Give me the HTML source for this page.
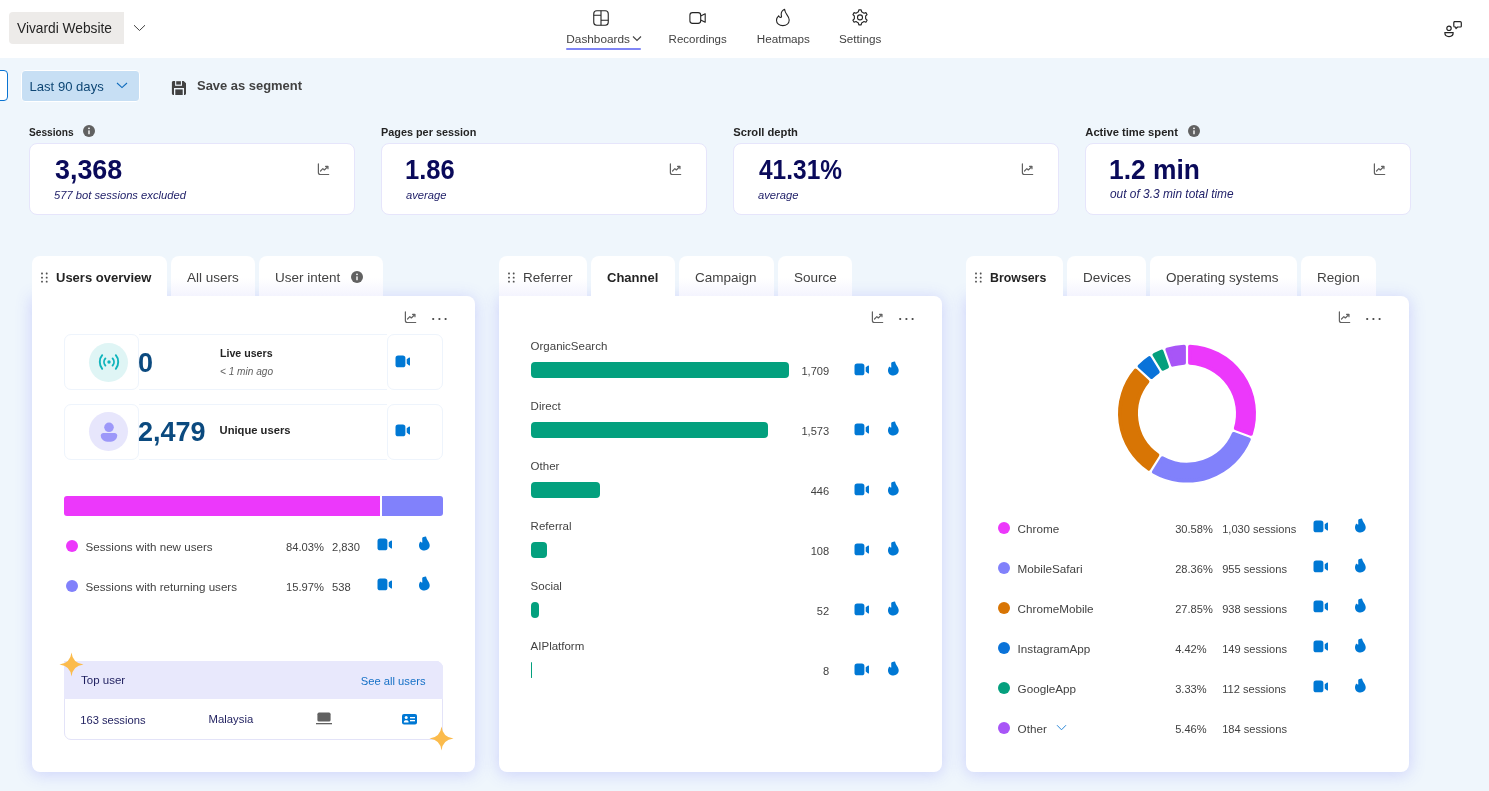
<!DOCTYPE html><html><head><meta charset="utf-8"><style>
html,body{margin:0;padding:0;}
body{width:1489px;height:791px;overflow:hidden;background:#eff6fc;position:relative;font-family:"Liberation Sans",sans-serif;}
.a{position:absolute;}
.t{position:absolute;white-space:nowrap;line-height:1;transform:translateZ(0);}
</style></head><body>
<div class="a" style="left:0px;top:0px;width:1489px;height:58px;background:#fff;"></div>
<div class="a" style="left:9px;top:12px;width:115px;height:32px;background:#edebe9;border-radius:4px 0 0 4px;"></div>
<div class="t" style="left:17.00px;top:22.36px;font-size:13.75px;font-weight:normal;font-style:normal;color:#242424;">Vivardi Website</div>
<svg class="a" style="left:133px;top:24px;" width="13" height="8" viewBox="0 0 13 8"><path d="M1 1.2 L6.5 6.5 L12 1.2" fill="none" stroke="#424242" stroke-width="1"/></svg>
<div class="t" style="left:566.30px;top:34.01px;font-size:11.8px;font-weight:normal;font-style:normal;color:#424242;">Dashboards</div>
<svg class="a" style="left:632px;top:35px;" width="10" height="7" viewBox="0 0 10 7"><path d="M1 1.5 L5 5.5 L9 1.5" fill="none" stroke="#424242" stroke-width="1.1"/></svg>
<div class="a" style="left:566px;top:48px;width:75px;height:2px;background:#7f85f5;border-radius:1px;"></div>
<div class="t" style="left:668.60px;top:34.27px;font-size:11.5px;font-weight:normal;font-style:normal;color:#424242;">Recordings</div>
<div class="t" style="left:756.70px;top:33.10px;font-size:11.7px;font-weight:normal;font-style:normal;color:#424242;">Heatmaps</div>
<div class="t" style="left:839.00px;top:33.10px;font-size:11.7px;font-weight:normal;font-style:normal;color:#424242;">Settings</div>
<svg class="a" style="left:592px;top:9px;" width="18" height="18" viewBox="0 0 18 18"><rect x="1.75" y="1.75" width="14.5" height="14.5" rx="3" fill="none" stroke="#242424" stroke-width="1.1"/><path d="M9 1.75 V16.25 M1.75 6.3 H9 M9 11.3 H16.25" stroke="#242424" stroke-width="1.1" fill="none"/></svg>
<svg class="a" style="left:688px;top:10px;" width="19" height="15" viewBox="0 0 19 15"><rect x="1.9" y="2.6" width="10.8" height="10.8" rx="2.6" fill="none" stroke="#242424" stroke-width="1.1"/><path d="M12.7 6 L17.2 3.7 V12.3 L12.7 10" fill="none" stroke="#242424" stroke-width="1.1" stroke-linejoin="round"/></svg>
<svg class="a" style="left:775px;top:8px;" width="16" height="19" viewBox="0 0 16 19"><path d="M9.6 1.3 C7.6 2.2 6.2 4 6.2 6.2 C6.2 7.2 6.5 8 6.5 8.6 C6.4 9.6 5 9.6 4.2 8.6 L3.6 7.8 C2.2 9.1 1.5 10.8 1.5 12.2 C1.5 15.4 4.3 17.6 7.8 17.6 C11.4 17.6 14.2 15.4 14.2 12 C14.2 9.6 12.8 7.8 11.6 6.2 C10.8 5 9.9 3.6 9.6 1.3 Z" fill="none" stroke="#242424" stroke-width="1.1" stroke-linejoin="round"/></svg>
<svg class="a" style="left:851px;top:8px;" width="18" height="19" viewBox="0 0 18 19"><path d="M7.38 3.83 L7.81 1.89 L10.19 1.89 L10.62 3.83 L13.01 5.21 L14.91 4.62 L16.10 6.68 L14.63 8.02 L14.63 10.78 L16.10 12.12 L14.91 14.18 L13.01 13.59 L10.62 14.97 L10.19 16.91 L7.81 16.91 L7.38 14.97 L4.99 13.59 L3.09 14.18 L1.90 12.12 L3.37 10.78 L3.37 8.02 L1.90 6.68 L3.09 4.62 L4.99 5.21 Z" fill="none" stroke="#242424" stroke-width="1.1" stroke-linejoin="round"/><circle cx="9" cy="9.4" r="2.5" fill="none" stroke="#242424" stroke-width="1.1"/></svg>
<svg class="a" style="left:1443px;top:20px;" width="20" height="19" viewBox="0 0 20 19"><circle cx="6" cy="8.3" r="2.2" fill="none" stroke="#242424" stroke-width="1.2"/><path d="M1.8 12.6 H10.2 C10.2 15.4 8.6 16.6 6 16.6 C3.4 16.6 1.8 15.4 1.8 12.6 Z" fill="none" stroke="#242424" stroke-width="1.2" stroke-linejoin="round"/><path d="M11.2 1.7 H17.2 C17.9 1.7 18.3 2.1 18.3 2.8 V5.9 C18.3 6.6 17.9 7 17.2 7 H14.6 L13 8.6 L12.6 7 H11.9 C11.2 7 10.8 6.6 10.8 5.9 V2.8 C10.8 2.1 11.2 1.7 11.9 1.7 Z" fill="none" stroke="#242424" stroke-width="1.2" stroke-linejoin="round"/></svg>
<div class="a" style="left:-6px;top:70px;width:12px;height:29px;background:#fff;border:1.5px solid #0a74d2;border-radius:4px;"></div>
<div class="a" style="left:20.5px;top:69.8px;width:117.5px;height:30px;background:#c7dff4;border:1px solid #fff;border-radius:4px;"></div>
<div class="t" style="left:29.50px;top:79.91px;font-size:13.1px;font-weight:normal;font-style:normal;color:#0e4775;">Last 90 days</div>
<svg class="a" style="left:116px;top:82px;" width="12" height="7" viewBox="0 0 12 7"><path d="M1 1 L6 5.6 L11 1" fill="none" stroke="#0f6cbd" stroke-width="1.1"/></svg>
<svg class="a" style="left:171px;top:80px;" width="16" height="16" viewBox="0 0 16 16"><path d="M2.4 0.9 H12.6 L15 3.3 V13.5 C15 14.3 14.3 15 13.5 15 H2.4 C1.6 15 0.9 14.3 0.9 13.5 V2.4 C0.9 1.6 1.6 0.9 2.4 0.9 Z" fill="#424242"/><rect x="4.1" y="0.5" width="6.9" height="5.3" fill="#eff6fc"/><rect x="5.2" y="1.2" width="4.7" height="3.4" fill="#424242"/><rect x="3" y="8" width="10" height="7.5" fill="#eff6fc"/><rect x="4.3" y="9.4" width="7.4" height="5.6" fill="#424242"/></svg>
<div class="t" style="left:197.00px;top:79.84px;font-size:12.95px;font-weight:bold;font-style:normal;color:#424242;">Save as segment</div>
<div class="t" style="left:29.30px;top:126.52px;font-size:11.2px;font-weight:bold;font-style:normal;color:#242424;transform:translateZ(0) scaleX(0.91);transform-origin:0 0;">Sessions</div>
<div class="a" style="left:29px;top:143px;width:323.5px;height:69.5px;background:#fff;border:1px solid #e6e5fb;border-radius:8px;"></div>
<div class="t" style="left:54.50px;top:155.60px;font-size:28px;font-weight:bold;font-style:normal;color:#0a0a5a;transform:translateZ(0) scaleX(0.96);transform-origin:0 0;">3,368</div>
<div class="t" style="left:54.00px;top:189.52px;font-size:11.2px;font-weight:normal;font-style:italic;color:#22226a;">577 bot sessions excluded</div>
<svg class="a" style="left:316.8px;top:162.8px;" width="13" height="13" viewBox="0 0 14 14"><path d="M1.5 1 V10.2 C1.5 11.6 2.2 12.4 3.6 12.4 H12.6" fill="none" stroke="#616161" stroke-width="1.3" stroke-linecap="round"/><path d="M3.8 8.6 L6.3 6.1 L7.9 7.5 L11.4 4" fill="none" stroke="#616161" stroke-width="1.3" stroke-linecap="round" stroke-linejoin="round"/><path d="M9.2 3.6 H11.8 V6.2" fill="none" stroke="#616161" stroke-width="1.3" stroke-linecap="round" stroke-linejoin="round"/></svg>
<div class="t" style="left:381.30px;top:126.52px;font-size:11.2px;font-weight:bold;font-style:normal;color:#242424;transform:translateZ(0) scaleX(0.97);transform-origin:0 0;">Pages per session</div>
<div class="a" style="left:381px;top:143px;width:323.5px;height:69.5px;background:#fff;border:1px solid #e6e5fb;border-radius:8px;"></div>
<div class="t" style="left:405.00px;top:155.60px;font-size:28px;font-weight:bold;font-style:normal;color:#0a0a5a;transform:translateZ(0) scaleX(0.912);transform-origin:0 0;">1.86</div>
<div class="t" style="left:406.00px;top:189.52px;font-size:11.2px;font-weight:normal;font-style:italic;color:#22226a;">average</div>
<svg class="a" style="left:668.8px;top:162.8px;" width="13" height="13" viewBox="0 0 14 14"><path d="M1.5 1 V10.2 C1.5 11.6 2.2 12.4 3.6 12.4 H12.6" fill="none" stroke="#616161" stroke-width="1.3" stroke-linecap="round"/><path d="M3.8 8.6 L6.3 6.1 L7.9 7.5 L11.4 4" fill="none" stroke="#616161" stroke-width="1.3" stroke-linecap="round" stroke-linejoin="round"/><path d="M9.2 3.6 H11.8 V6.2" fill="none" stroke="#616161" stroke-width="1.3" stroke-linecap="round" stroke-linejoin="round"/></svg>
<div class="t" style="left:733.30px;top:126.52px;font-size:11.2px;font-weight:bold;font-style:normal;color:#242424;transform:translateZ(0) scaleX(1.0);transform-origin:0 0;">Scroll depth</div>
<div class="a" style="left:733px;top:143px;width:323.5px;height:69.5px;background:#fff;border:1px solid #e6e5fb;border-radius:8px;"></div>
<div class="t" style="left:758.50px;top:155.60px;font-size:28px;font-weight:bold;font-style:normal;color:#0a0a5a;transform:translateZ(0) scaleX(0.874);transform-origin:0 0;">41.31%</div>
<div class="t" style="left:758.00px;top:189.52px;font-size:11.2px;font-weight:normal;font-style:italic;color:#22226a;">average</div>
<svg class="a" style="left:1020.8px;top:162.8px;" width="13" height="13" viewBox="0 0 14 14"><path d="M1.5 1 V10.2 C1.5 11.6 2.2 12.4 3.6 12.4 H12.6" fill="none" stroke="#616161" stroke-width="1.3" stroke-linecap="round"/><path d="M3.8 8.6 L6.3 6.1 L7.9 7.5 L11.4 4" fill="none" stroke="#616161" stroke-width="1.3" stroke-linecap="round" stroke-linejoin="round"/><path d="M9.2 3.6 H11.8 V6.2" fill="none" stroke="#616161" stroke-width="1.3" stroke-linecap="round" stroke-linejoin="round"/></svg>
<div class="t" style="left:1085.30px;top:126.52px;font-size:11.2px;font-weight:bold;font-style:normal;color:#242424;transform:translateZ(0) scaleX(1.0);transform-origin:0 0;">Active time spent</div>
<div class="a" style="left:1085px;top:143px;width:323.5px;height:69.5px;background:#fff;border:1px solid #e6e5fb;border-radius:8px;"></div>
<div class="t" style="left:1109.30px;top:155.60px;font-size:28px;font-weight:bold;font-style:normal;color:#0a0a5a;transform:translateZ(0) scaleX(0.941);transform-origin:0 0;">1.2 min</div>
<div class="t" style="left:1110.00px;top:188.93px;font-size:11.9px;font-weight:normal;font-style:italic;color:#22226a;">out of 3.3 min total time</div>
<svg class="a" style="left:1372.8px;top:162.8px;" width="13" height="13" viewBox="0 0 14 14"><path d="M1.5 1 V10.2 C1.5 11.6 2.2 12.4 3.6 12.4 H12.6" fill="none" stroke="#616161" stroke-width="1.3" stroke-linecap="round"/><path d="M3.8 8.6 L6.3 6.1 L7.9 7.5 L11.4 4" fill="none" stroke="#616161" stroke-width="1.3" stroke-linecap="round" stroke-linejoin="round"/><path d="M9.2 3.6 H11.8 V6.2" fill="none" stroke="#616161" stroke-width="1.3" stroke-linecap="round" stroke-linejoin="round"/></svg>
<svg class="a" style="left:83px;top:125px;" width="12" height="12" viewBox="0 0 12 12"><circle cx="6.0" cy="6.0" r="6.0" fill="#616161"/><rect x="5.3" y="5.28" width="1.4" height="4.08" rx="0.5" fill="#fff"/><circle cx="6.0" cy="3.3600000000000003" r="0.9" fill="#fff"/></svg>
<svg class="a" style="left:1188px;top:125px;" width="12" height="12" viewBox="0 0 12 12"><circle cx="6.0" cy="6.0" r="6.0" fill="#616161"/><rect x="5.3" y="5.28" width="1.4" height="4.08" rx="0.5" fill="#fff"/><circle cx="6.0" cy="3.3600000000000003" r="0.9" fill="#fff"/></svg>
<div class="a" style="left:32px;top:296px;width:443px;height:476px;background:#fff;border-radius:0 8px 8px 8px;box-shadow:0 2px 16px 1px rgba(90,90,250,0.21);"></div>
<div class="a" style="left:32px;top:256px;width:135px;height:44px;background:#fff;border-radius:8px 8px 0 0;z-index:2;"></div>
<div class="a" style="left:171px;top:256px;width:84px;height:40px;background:linear-gradient(#fff 0%, #fff 55%, #f4f4fe 100%);border-radius:8px 8px 0 0;"></div>
<div class="a" style="left:259px;top:256px;width:124px;height:40px;background:linear-gradient(#fff 0%, #fff 55%, #f4f4fe 100%);border-radius:8px 8px 0 0;"></div>
<svg class="a" style="left:40.5px;top:271.5px;z-index:3;" width="7" height="11" viewBox="0 0 7 11"><rect x="0.10" y="0.60" width="1.8" height="1.8" rx="0.6" fill="#505050"/><rect x="0.10" y="4.70" width="1.8" height="1.8" rx="0.6" fill="#505050"/><rect x="0.10" y="8.80" width="1.8" height="1.8" rx="0.6" fill="#505050"/><rect x="4.80" y="0.60" width="1.8" height="1.8" rx="0.6" fill="#505050"/><rect x="4.80" y="4.70" width="1.8" height="1.8" rx="0.6" fill="#505050"/><rect x="4.80" y="8.80" width="1.8" height="1.8" rx="0.6" fill="#505050"/></svg>
<div class="t" style="left:56.00px;top:271.00px;font-size:13px;font-weight:bold;font-style:normal;color:#242424;z-index:3;">Users overview</div>
<div class="t" style="left:187.00px;top:270.57px;font-size:13.5px;font-weight:normal;font-style:normal;color:#424242;z-index:3;">All users</div>
<div class="t" style="left:275.00px;top:270.57px;font-size:13.5px;font-weight:normal;font-style:normal;color:#424242;z-index:3;">User intent</div>
<svg class="a" style="left:351px;top:271px;" width="12" height="12" viewBox="0 0 12 12"><circle cx="6.0" cy="6.0" r="6.0" fill="#616161"/><rect x="5.3" y="5.28" width="1.4" height="4.08" rx="0.5" fill="#fff"/><circle cx="6.0" cy="3.3600000000000003" r="0.9" fill="#fff"/></svg>
<svg class="a" style="left:404.2px;top:310.8px;" width="13" height="13" viewBox="0 0 14 14"><path d="M1.5 1 V10.2 C1.5 11.6 2.2 12.4 3.6 12.4 H12.6" fill="none" stroke="#616161" stroke-width="1.3" stroke-linecap="round"/><path d="M3.8 8.6 L6.3 6.1 L7.9 7.5 L11.4 4" fill="none" stroke="#616161" stroke-width="1.3" stroke-linecap="round" stroke-linejoin="round"/><path d="M9.2 3.6 H11.8 V6.2" fill="none" stroke="#616161" stroke-width="1.3" stroke-linecap="round" stroke-linejoin="round"/></svg>
<svg class="a" style="left:432px;top:317px;" width="16" height="4" viewBox="0 0 16 4"><circle cx="1.20" cy="2" r="1.1" fill="#424242"/><circle cx="7.40" cy="2" r="1.1" fill="#424242"/><circle cx="13.60" cy="2" r="1.1" fill="#424242"/></svg>
<div class="a" style="left:499px;top:296px;width:443px;height:476px;background:#fff;border-radius:0 8px 8px 8px;box-shadow:0 2px 16px 1px rgba(90,90,250,0.21);"></div>
<div class="a" style="left:499px;top:256px;width:88px;height:40px;background:linear-gradient(#fff 0%, #fff 55%, #f4f4fe 100%);border-radius:8px 8px 0 0;"></div>
<div class="a" style="left:591px;top:256px;width:84px;height:44px;background:#fff;border-radius:8px 8px 0 0;z-index:2;"></div>
<div class="a" style="left:679px;top:256px;width:95px;height:40px;background:linear-gradient(#fff 0%, #fff 55%, #f4f4fe 100%);border-radius:8px 8px 0 0;"></div>
<div class="a" style="left:778px;top:256px;width:74px;height:40px;background:linear-gradient(#fff 0%, #fff 55%, #f4f4fe 100%);border-radius:8px 8px 0 0;"></div>
<svg class="a" style="left:507.5px;top:271.5px;z-index:3;" width="7" height="11" viewBox="0 0 7 11"><rect x="0.10" y="0.60" width="1.8" height="1.8" rx="0.6" fill="#505050"/><rect x="0.10" y="4.70" width="1.8" height="1.8" rx="0.6" fill="#505050"/><rect x="0.10" y="8.80" width="1.8" height="1.8" rx="0.6" fill="#505050"/><rect x="4.80" y="0.60" width="1.8" height="1.8" rx="0.6" fill="#505050"/><rect x="4.80" y="4.70" width="1.8" height="1.8" rx="0.6" fill="#505050"/><rect x="4.80" y="8.80" width="1.8" height="1.8" rx="0.6" fill="#505050"/></svg>
<div class="t" style="left:523.00px;top:270.57px;font-size:13.5px;font-weight:normal;font-style:normal;color:#424242;z-index:3;">Referrer</div>
<div class="t" style="left:607.00px;top:271.00px;font-size:13px;font-weight:bold;font-style:normal;color:#242424;z-index:3;">Channel</div>
<div class="t" style="left:695.00px;top:270.57px;font-size:13.5px;font-weight:normal;font-style:normal;color:#424242;z-index:3;">Campaign</div>
<div class="t" style="left:794.00px;top:270.57px;font-size:13.5px;font-weight:normal;font-style:normal;color:#424242;z-index:3;">Source</div>
<svg class="a" style="left:871.2px;top:310.8px;" width="13" height="13" viewBox="0 0 14 14"><path d="M1.5 1 V10.2 C1.5 11.6 2.2 12.4 3.6 12.4 H12.6" fill="none" stroke="#616161" stroke-width="1.3" stroke-linecap="round"/><path d="M3.8 8.6 L6.3 6.1 L7.9 7.5 L11.4 4" fill="none" stroke="#616161" stroke-width="1.3" stroke-linecap="round" stroke-linejoin="round"/><path d="M9.2 3.6 H11.8 V6.2" fill="none" stroke="#616161" stroke-width="1.3" stroke-linecap="round" stroke-linejoin="round"/></svg>
<svg class="a" style="left:899px;top:317px;" width="16" height="4" viewBox="0 0 16 4"><circle cx="1.20" cy="2" r="1.1" fill="#424242"/><circle cx="7.40" cy="2" r="1.1" fill="#424242"/><circle cx="13.60" cy="2" r="1.1" fill="#424242"/></svg>
<div class="a" style="left:966px;top:296px;width:443px;height:476px;background:#fff;border-radius:0 8px 8px 8px;box-shadow:0 2px 16px 1px rgba(90,90,250,0.21);"></div>
<div class="a" style="left:966px;top:256px;width:97px;height:44px;background:#fff;border-radius:8px 8px 0 0;z-index:2;"></div>
<div class="a" style="left:1067px;top:256px;width:79px;height:40px;background:linear-gradient(#fff 0%, #fff 55%, #f4f4fe 100%);border-radius:8px 8px 0 0;"></div>
<div class="a" style="left:1150px;top:256px;width:147px;height:40px;background:linear-gradient(#fff 0%, #fff 55%, #f4f4fe 100%);border-radius:8px 8px 0 0;"></div>
<div class="a" style="left:1301px;top:256px;width:75px;height:40px;background:linear-gradient(#fff 0%, #fff 55%, #f4f4fe 100%);border-radius:8px 8px 0 0;"></div>
<svg class="a" style="left:974.5px;top:271.5px;z-index:3;" width="7" height="11" viewBox="0 0 7 11"><rect x="0.10" y="0.60" width="1.8" height="1.8" rx="0.6" fill="#505050"/><rect x="0.10" y="4.70" width="1.8" height="1.8" rx="0.6" fill="#505050"/><rect x="0.10" y="8.80" width="1.8" height="1.8" rx="0.6" fill="#505050"/><rect x="4.80" y="0.60" width="1.8" height="1.8" rx="0.6" fill="#505050"/><rect x="4.80" y="4.70" width="1.8" height="1.8" rx="0.6" fill="#505050"/><rect x="4.80" y="8.80" width="1.8" height="1.8" rx="0.6" fill="#505050"/></svg>
<div class="t" style="left:990.00px;top:271.00px;font-size:13px;font-weight:bold;font-style:normal;color:#242424;transform:translateZ(0) scaleX(0.95);transform-origin:0 0;z-index:3;">Browsers</div>
<div class="t" style="left:1083.00px;top:270.57px;font-size:13.5px;font-weight:normal;font-style:normal;color:#424242;z-index:3;">Devices</div>
<div class="t" style="left:1166.00px;top:270.57px;font-size:13.5px;font-weight:normal;font-style:normal;color:#424242;z-index:3;">Operating systems</div>
<div class="t" style="left:1317.00px;top:270.57px;font-size:13.5px;font-weight:normal;font-style:normal;color:#424242;z-index:3;">Region</div>
<svg class="a" style="left:1338.2px;top:310.8px;" width="13" height="13" viewBox="0 0 14 14"><path d="M1.5 1 V10.2 C1.5 11.6 2.2 12.4 3.6 12.4 H12.6" fill="none" stroke="#616161" stroke-width="1.3" stroke-linecap="round"/><path d="M3.8 8.6 L6.3 6.1 L7.9 7.5 L11.4 4" fill="none" stroke="#616161" stroke-width="1.3" stroke-linecap="round" stroke-linejoin="round"/><path d="M9.2 3.6 H11.8 V6.2" fill="none" stroke="#616161" stroke-width="1.3" stroke-linecap="round" stroke-linejoin="round"/></svg>
<svg class="a" style="left:1366px;top:317px;" width="16" height="4" viewBox="0 0 16 4"><circle cx="1.20" cy="2" r="1.1" fill="#424242"/><circle cx="7.40" cy="2" r="1.1" fill="#424242"/><circle cx="13.60" cy="2" r="1.1" fill="#424242"/></svg>
<div class="a" style="left:64.2px;top:334.2px;width:73px;height:54.3px;background:#fff;border:1px solid #eef4fc;border-radius:7px;"></div>
<div class="a" style="left:139px;top:334.2px;width:248px;height:54.3px;background:#fff;border-top:1px solid #eef4fc;border-bottom:1px solid #eef4fc;"></div>
<div class="a" style="left:387px;top:334.2px;width:53.6px;height:54.3px;background:#fff;border:1px solid #eef4fc;border-radius:7px;"></div>
<div class="a" style="left:64.2px;top:403.5px;width:73px;height:54.3px;background:#fff;border:1px solid #eef4fc;border-radius:7px;"></div>
<div class="a" style="left:139px;top:403.5px;width:248px;height:54.3px;background:#fff;border-top:1px solid #eef4fc;border-bottom:1px solid #eef4fc;"></div>
<div class="a" style="left:387px;top:403.5px;width:53.6px;height:54.3px;background:#fff;border:1px solid #eef4fc;border-radius:7px;"></div>
<div class="a" style="left:89px;top:343px;width:39px;height:39px;background:#dff5f5;border-radius:50%;"></div>
<svg class="a" style="left:97px;top:353px;" width="24" height="19" viewBox="0 0 24 19"><path d="M5.2 2.2 C2 5.8 2 12.2 5.2 15.8 M18.8 2.2 C22 5.8 22 12.2 18.8 15.8 M8.4 5.4 C6.6 7.4 6.6 10.6 8.4 12.6 M15.6 5.4 C17.4 7.4 17.4 10.6 15.6 12.6" fill="none" stroke="#0fb4bc" stroke-width="1.9" stroke-linecap="round"/><circle cx="12" cy="9" r="1.7" fill="#0fb4bc"/></svg>
<div class="a" style="left:89px;top:412px;width:39px;height:39px;background:#e7e6fc;border-radius:50%;"></div>
<svg class="a" style="left:99px;top:420px;" width="20" height="24" viewBox="0 0 20 24"><circle cx="10" cy="7.3" r="4.8" fill="#9d98f9"/><path d="M1.8 15.4 C1.8 13.9 2.9 13 4.4 13 H15.6 C17.1 13 18.2 13.9 18.2 15.4 C18.2 19.4 14.6 21.8 10 21.8 C5.4 21.8 1.8 19.4 1.8 15.4 Z" fill="#9d98f9"/></svg>
<div class="t" style="left:138.20px;top:348.60px;font-size:28px;font-weight:bold;font-style:normal;color:#0b4a7f;transform:translateZ(0) scaleX(0.965);transform-origin:0 0;">0</div>
<div class="t" style="left:219.60px;top:347.82px;font-size:11.2px;font-weight:bold;font-style:normal;color:#242424;transform:translateZ(0) scaleX(0.95);transform-origin:0 0;">Live users</div>
<div class="t" style="left:220.00px;top:367.45px;font-size:10.1px;font-weight:normal;font-style:italic;color:#616161;">&lt; 1 min ago</div>
<div class="t" style="left:138.20px;top:417.60px;font-size:28px;font-weight:bold;font-style:normal;color:#0b4a7f;transform:translateZ(0) scaleX(0.965);transform-origin:0 0;">2,479</div>
<div class="t" style="left:219.60px;top:424.62px;font-size:11.2px;font-weight:bold;font-style:normal;color:#242424;">Unique users</div>
<svg class="a" style="left:394.8px;top:355.1px;" width="16" height="13" viewBox="0 0 16 13"><rect x="0.5" y="0.5" width="9.9" height="11.8" rx="2.6" fill="#0078d4"/><path d="M11.7 4.3 L14.1 2.6 C14.5 2.3 15 2.6 15 3.1 V9.9 C15 10.4 14.5 10.7 14.1 10.4 L11.7 8.6 Z" fill="#0078d4"/></svg>
<svg class="a" style="left:394.8px;top:424.1px;" width="16" height="13" viewBox="0 0 16 13"><rect x="0.5" y="0.5" width="9.9" height="11.8" rx="2.6" fill="#0078d4"/><path d="M11.7 4.3 L14.1 2.6 C14.5 2.3 15 2.6 15 3.1 V9.9 C15 10.4 14.5 10.7 14.1 10.4 L11.7 8.6 Z" fill="#0078d4"/></svg>
<div class="a" style="left:64px;top:496px;width:316px;height:20px;background:#ec38fb;border-radius:3px 0 0 3px;"></div>
<div class="a" style="left:382px;top:496px;width:61px;height:20px;background:#8181fb;border-radius:0 3px 3px 0;"></div>
<div class="a" style="left:66px;top:540px;width:12px;height:12px;background:#ec38fb;border-radius:50%;"></div>
<div class="t" style="left:85.60px;top:541.18px;font-size:11.6px;font-weight:normal;font-style:normal;color:#424242;">Sessions with new users</div>
<div class="t" style="left:286.00px;top:541.52px;font-size:11.2px;font-weight:normal;font-style:normal;color:#424242;">84.03%</div>
<div class="t" style="left:332.00px;top:541.52px;font-size:11.2px;font-weight:normal;font-style:normal;color:#424242;">2,830</div>
<svg class="a" style="left:376.8px;top:538.1px;" width="16" height="13" viewBox="0 0 16 13"><rect x="0.5" y="0.5" width="9.9" height="11.8" rx="2.6" fill="#0078d4"/><path d="M11.7 4.3 L14.1 2.6 C14.5 2.3 15 2.6 15 3.1 V9.9 C15 10.4 14.5 10.7 14.1 10.4 L11.7 8.6 Z" fill="#0078d4"/></svg>
<svg class="a" style="left:417.5px;top:535.8px;" width="13" height="16" viewBox="0 0 13 16"><path d="M4.2 2.6 C4.2 1.6 5.2 0.9 6.4 0.8 L8 0.6 C8.3 2.2 9 3.6 10 5 C11 6.4 11.7 7.8 11.7 9.6 C11.7 12.4 9.4 14.4 6.5 14.4 C3.4 14.4 1 12.4 1 9.4 C1 7.8 1.6 6.4 2.4 5.4 C2.8 6.1 3.6 6.6 4.3 6.4 Z" fill="#0078d4"/></svg>
<div class="a" style="left:66px;top:580px;width:12px;height:12px;background:#8181fb;border-radius:50%;"></div>
<div class="t" style="left:85.60px;top:581.18px;font-size:11.6px;font-weight:normal;font-style:normal;color:#424242;">Sessions with returning users</div>
<div class="t" style="left:286.00px;top:581.52px;font-size:11.2px;font-weight:normal;font-style:normal;color:#424242;">15.97%</div>
<div class="t" style="left:332.00px;top:581.52px;font-size:11.2px;font-weight:normal;font-style:normal;color:#424242;">538</div>
<svg class="a" style="left:376.8px;top:578.1px;" width="16" height="13" viewBox="0 0 16 13"><rect x="0.5" y="0.5" width="9.9" height="11.8" rx="2.6" fill="#0078d4"/><path d="M11.7 4.3 L14.1 2.6 C14.5 2.3 15 2.6 15 3.1 V9.9 C15 10.4 14.5 10.7 14.1 10.4 L11.7 8.6 Z" fill="#0078d4"/></svg>
<svg class="a" style="left:417.5px;top:575.8px;" width="13" height="16" viewBox="0 0 13 16"><path d="M4.2 2.6 C4.2 1.6 5.2 0.9 6.4 0.8 L8 0.6 C8.3 2.2 9 3.6 10 5 C11 6.4 11.7 7.8 11.7 9.6 C11.7 12.4 9.4 14.4 6.5 14.4 C3.4 14.4 1 12.4 1 9.4 C1 7.8 1.6 6.4 2.4 5.4 C2.8 6.1 3.6 6.6 4.3 6.4 Z" fill="#0078d4"/></svg>
<div class="a" style="left:64px;top:661px;width:377px;height:77px;background:#fff;border:1px solid #e3e3f8;border-radius:0 7px 7px 7px;"></div>
<div class="a" style="left:64px;top:661px;width:379px;height:38px;background:#e8e8fc;border-radius:0 7px 0 0;"></div>
<div class="t" style="left:81.00px;top:675.27px;font-size:11.5px;font-weight:normal;font-style:normal;color:#1e1e5e;">Top user</div>
<div class="t" style="left:360.80px;top:675.52px;font-size:11.2px;font-weight:normal;font-style:normal;color:#1570c6;">See all users</div>
<div class="t" style="left:80.20px;top:714.52px;font-size:11.2px;font-weight:normal;font-style:normal;color:#1e1e5e;">163 sessions</div>
<div class="t" style="left:208.60px;top:714.43px;font-size:11.3px;font-weight:normal;font-style:normal;color:#1e1e5e;">Malaysia</div>
<svg class="a" style="left:315px;top:712px;" width="18" height="13" viewBox="0 0 18 13"><rect x="2.4" y="0.6" width="13.2" height="9" rx="1.6" fill="#616161"/><rect x="1" y="11" width="16" height="1.3" fill="#616161"/></svg>
<svg class="a" style="left:401px;top:713px;" width="17" height="12" viewBox="0 0 17 12"><rect x="1" y="1" width="15" height="10.5" rx="2" fill="#0078d4"/><circle cx="5.2" cy="4.6" r="1.5" fill="#fff"/><path d="M2.8 9.4 C2.8 7.6 3.8 7.2 5.2 7.2 C6.6 7.2 7.6 7.6 7.6 9.4 Z" fill="#fff"/><rect x="9" y="4" width="5" height="1.3" fill="#fff"/><rect x="9" y="7" width="5" height="1.3" fill="#fff"/></svg>
<svg class="a" style="left:0px;top:0px;z-index:4;pointer-events:none;" width="1489" height="791" viewBox="0 0 1489 791"><path d="M71.5 652.5 Q72.7 663.3 83.5 664.5 Q72.7 665.7 71.5 676.5 Q70.3 665.7 59.5 664.5 Q70.3 663.3 71.5 652.5 Z" fill="#fbbb4c"/></svg>
<svg class="a" style="left:0px;top:0px;z-index:4;pointer-events:none;" width="1489" height="791" viewBox="0 0 1489 791"><path d="M441.5 726.5 Q442.7 737.3 453.5 738.5 Q442.7 739.7 441.5 750.5 Q440.3 739.7 429.5 738.5 Q440.3 737.3 441.5 726.5 Z" fill="#fbbb4c"/></svg>
<div class="t" style="left:530.60px;top:341.27px;font-size:11.5px;font-weight:normal;font-style:normal;color:#424242;">OrganicSearch</div>
<div class="a" style="left:531px;top:362px;width:258px;height:16px;background:#03a07e;border-radius:4px;"></div>
<div class="t" style="right:659.80px;top:365.80px;font-size:11.1px;font-weight:normal;font-style:normal;color:#424242;">1,709</div>
<svg class="a" style="left:853.8px;top:363.1px;" width="16" height="13" viewBox="0 0 16 13"><rect x="0.5" y="0.5" width="9.9" height="11.8" rx="2.6" fill="#0078d4"/><path d="M11.7 4.3 L14.1 2.6 C14.5 2.3 15 2.6 15 3.1 V9.9 C15 10.4 14.5 10.7 14.1 10.4 L11.7 8.6 Z" fill="#0078d4"/></svg>
<svg class="a" style="left:887.0px;top:360.8px;" width="13" height="16" viewBox="0 0 13 16"><path d="M4.2 2.6 C4.2 1.6 5.2 0.9 6.4 0.8 L8 0.6 C8.3 2.2 9 3.6 10 5 C11 6.4 11.7 7.8 11.7 9.6 C11.7 12.4 9.4 14.4 6.5 14.4 C3.4 14.4 1 12.4 1 9.4 C1 7.8 1.6 6.4 2.4 5.4 C2.8 6.1 3.6 6.6 4.3 6.4 Z" fill="#0078d4"/></svg>
<div class="t" style="left:530.60px;top:401.27px;font-size:11.5px;font-weight:normal;font-style:normal;color:#424242;">Direct</div>
<div class="a" style="left:531px;top:422px;width:237px;height:16px;background:#03a07e;border-radius:4px;"></div>
<div class="t" style="right:659.80px;top:425.80px;font-size:11.1px;font-weight:normal;font-style:normal;color:#424242;">1,573</div>
<svg class="a" style="left:853.8px;top:423.1px;" width="16" height="13" viewBox="0 0 16 13"><rect x="0.5" y="0.5" width="9.9" height="11.8" rx="2.6" fill="#0078d4"/><path d="M11.7 4.3 L14.1 2.6 C14.5 2.3 15 2.6 15 3.1 V9.9 C15 10.4 14.5 10.7 14.1 10.4 L11.7 8.6 Z" fill="#0078d4"/></svg>
<svg class="a" style="left:887.0px;top:420.8px;" width="13" height="16" viewBox="0 0 13 16"><path d="M4.2 2.6 C4.2 1.6 5.2 0.9 6.4 0.8 L8 0.6 C8.3 2.2 9 3.6 10 5 C11 6.4 11.7 7.8 11.7 9.6 C11.7 12.4 9.4 14.4 6.5 14.4 C3.4 14.4 1 12.4 1 9.4 C1 7.8 1.6 6.4 2.4 5.4 C2.8 6.1 3.6 6.6 4.3 6.4 Z" fill="#0078d4"/></svg>
<div class="t" style="left:530.60px;top:461.27px;font-size:11.5px;font-weight:normal;font-style:normal;color:#424242;">Other</div>
<div class="a" style="left:531px;top:482px;width:69px;height:16px;background:#03a07e;border-radius:4px;"></div>
<div class="t" style="right:659.80px;top:485.80px;font-size:11.1px;font-weight:normal;font-style:normal;color:#424242;">446</div>
<svg class="a" style="left:853.8px;top:483.1px;" width="16" height="13" viewBox="0 0 16 13"><rect x="0.5" y="0.5" width="9.9" height="11.8" rx="2.6" fill="#0078d4"/><path d="M11.7 4.3 L14.1 2.6 C14.5 2.3 15 2.6 15 3.1 V9.9 C15 10.4 14.5 10.7 14.1 10.4 L11.7 8.6 Z" fill="#0078d4"/></svg>
<svg class="a" style="left:887.0px;top:480.8px;" width="13" height="16" viewBox="0 0 13 16"><path d="M4.2 2.6 C4.2 1.6 5.2 0.9 6.4 0.8 L8 0.6 C8.3 2.2 9 3.6 10 5 C11 6.4 11.7 7.8 11.7 9.6 C11.7 12.4 9.4 14.4 6.5 14.4 C3.4 14.4 1 12.4 1 9.4 C1 7.8 1.6 6.4 2.4 5.4 C2.8 6.1 3.6 6.6 4.3 6.4 Z" fill="#0078d4"/></svg>
<div class="t" style="left:530.60px;top:521.27px;font-size:11.5px;font-weight:normal;font-style:normal;color:#424242;">Referral</div>
<div class="a" style="left:531px;top:542px;width:16px;height:16px;background:#03a07e;border-radius:4px;"></div>
<div class="t" style="right:659.80px;top:545.80px;font-size:11.1px;font-weight:normal;font-style:normal;color:#424242;">108</div>
<svg class="a" style="left:853.8px;top:543.1px;" width="16" height="13" viewBox="0 0 16 13"><rect x="0.5" y="0.5" width="9.9" height="11.8" rx="2.6" fill="#0078d4"/><path d="M11.7 4.3 L14.1 2.6 C14.5 2.3 15 2.6 15 3.1 V9.9 C15 10.4 14.5 10.7 14.1 10.4 L11.7 8.6 Z" fill="#0078d4"/></svg>
<svg class="a" style="left:887.0px;top:540.8px;" width="13" height="16" viewBox="0 0 13 16"><path d="M4.2 2.6 C4.2 1.6 5.2 0.9 6.4 0.8 L8 0.6 C8.3 2.2 9 3.6 10 5 C11 6.4 11.7 7.8 11.7 9.6 C11.7 12.4 9.4 14.4 6.5 14.4 C3.4 14.4 1 12.4 1 9.4 C1 7.8 1.6 6.4 2.4 5.4 C2.8 6.1 3.6 6.6 4.3 6.4 Z" fill="#0078d4"/></svg>
<div class="t" style="left:530.60px;top:581.27px;font-size:11.5px;font-weight:normal;font-style:normal;color:#424242;">Social</div>
<div class="a" style="left:531px;top:602px;width:8px;height:16px;background:#03a07e;border-radius:4px;"></div>
<div class="t" style="right:659.80px;top:605.80px;font-size:11.1px;font-weight:normal;font-style:normal;color:#424242;">52</div>
<svg class="a" style="left:853.8px;top:603.1px;" width="16" height="13" viewBox="0 0 16 13"><rect x="0.5" y="0.5" width="9.9" height="11.8" rx="2.6" fill="#0078d4"/><path d="M11.7 4.3 L14.1 2.6 C14.5 2.3 15 2.6 15 3.1 V9.9 C15 10.4 14.5 10.7 14.1 10.4 L11.7 8.6 Z" fill="#0078d4"/></svg>
<svg class="a" style="left:887.0px;top:600.8px;" width="13" height="16" viewBox="0 0 13 16"><path d="M4.2 2.6 C4.2 1.6 5.2 0.9 6.4 0.8 L8 0.6 C8.3 2.2 9 3.6 10 5 C11 6.4 11.7 7.8 11.7 9.6 C11.7 12.4 9.4 14.4 6.5 14.4 C3.4 14.4 1 12.4 1 9.4 C1 7.8 1.6 6.4 2.4 5.4 C2.8 6.1 3.6 6.6 4.3 6.4 Z" fill="#0078d4"/></svg>
<div class="t" style="left:530.60px;top:641.27px;font-size:11.5px;font-weight:normal;font-style:normal;color:#424242;">AIPlatform</div>
<div class="a" style="left:531px;top:662px;width:1.2px;height:16px;background:#03a07e;border-radius:0.6px;"></div>
<div class="t" style="right:659.80px;top:665.80px;font-size:11.1px;font-weight:normal;font-style:normal;color:#424242;">8</div>
<svg class="a" style="left:853.8px;top:663.1px;" width="16" height="13" viewBox="0 0 16 13"><rect x="0.5" y="0.5" width="9.9" height="11.8" rx="2.6" fill="#0078d4"/><path d="M11.7 4.3 L14.1 2.6 C14.5 2.3 15 2.6 15 3.1 V9.9 C15 10.4 14.5 10.7 14.1 10.4 L11.7 8.6 Z" fill="#0078d4"/></svg>
<svg class="a" style="left:887.0px;top:660.8px;" width="13" height="16" viewBox="0 0 13 16"><path d="M4.2 2.6 C4.2 1.6 5.2 0.9 6.4 0.8 L8 0.6 C8.3 2.2 9 3.6 10 5 C11 6.4 11.7 7.8 11.7 9.6 C11.7 12.4 9.4 14.4 6.5 14.4 C3.4 14.4 1 12.4 1 9.4 C1 7.8 1.6 6.4 2.4 5.4 C2.8 6.1 3.6 6.6 4.3 6.4 Z" fill="#0078d4"/></svg>
<svg class="a" style="left:0px;top:0px;" width="1489" height="791" viewBox="0 0 1489 791"><path d="M1189.90 346.46 A67.2 67.2 0 0 1 1251.05 433.94 L1235.63 428.30 A50.8 50.8 0 0 0 1189.90 362.88 Z" fill="#ec38fb" stroke="#ec38fb" stroke-width="3.6" stroke-linejoin="round"/><path d="M1249.06 439.38 A67.2 67.2 0 0 1 1153.69 471.97 L1162.44 458.07 A50.8 50.8 0 0 0 1233.64 433.74 Z" fill="#8181fb" stroke="#8181fb" stroke-width="3.6" stroke-linejoin="round"/><path d="M1148.79 468.88 A67.2 67.2 0 0 1 1135.50 370.43 L1147.62 381.51 A50.8 50.8 0 0 0 1157.53 454.98 Z" fill="#d87504" stroke="#d87504" stroke-width="3.6" stroke-linejoin="round"/><path d="M1139.41 366.15 A67.2 67.2 0 0 1 1149.31 357.97 L1157.92 371.94 A50.8 50.8 0 0 0 1151.53 377.23 Z" fill="#0a73d9" stroke="#0a73d9" stroke-width="3.6" stroke-linejoin="round"/><path d="M1154.25 354.92 A67.2 67.2 0 0 1 1161.69 351.35 L1167.21 366.81 A50.8 50.8 0 0 0 1162.86 368.90 Z" fill="#05a07e" stroke="#05a07e" stroke-width="3.6" stroke-linejoin="round"/><path d="M1167.15 349.40 A67.2 67.2 0 0 1 1184.10 346.46 L1184.10 362.88 A50.8 50.8 0 0 0 1172.67 364.86 Z" fill="#a855f7" stroke="#a855f7" stroke-width="3.6" stroke-linejoin="round"/></svg>
<div class="a" style="left:998px;top:522px;width:12px;height:12px;background:#ec38fb;border-radius:50%;"></div>
<div class="t" style="left:1017.60px;top:523.10px;font-size:11.7px;font-weight:normal;font-style:normal;color:#424242;">Chrome</div>
<div class="t" style="left:1175.20px;top:523.60px;font-size:11.1px;font-weight:normal;font-style:normal;color:#424242;">30.58%</div>
<div class="t" style="left:1222.20px;top:523.60px;font-size:11.1px;font-weight:normal;font-style:normal;color:#424242;">1,030 sessions</div>
<svg class="a" style="left:1312.8px;top:520.1px;" width="16" height="13" viewBox="0 0 16 13"><rect x="0.5" y="0.5" width="9.9" height="11.8" rx="2.6" fill="#0078d4"/><path d="M11.7 4.3 L14.1 2.6 C14.5 2.3 15 2.6 15 3.1 V9.9 C15 10.4 14.5 10.7 14.1 10.4 L11.7 8.6 Z" fill="#0078d4"/></svg>
<svg class="a" style="left:1354.0px;top:517.8px;" width="13" height="16" viewBox="0 0 13 16"><path d="M4.2 2.6 C4.2 1.6 5.2 0.9 6.4 0.8 L8 0.6 C8.3 2.2 9 3.6 10 5 C11 6.4 11.7 7.8 11.7 9.6 C11.7 12.4 9.4 14.4 6.5 14.4 C3.4 14.4 1 12.4 1 9.4 C1 7.8 1.6 6.4 2.4 5.4 C2.8 6.1 3.6 6.6 4.3 6.4 Z" fill="#0078d4"/></svg>
<div class="a" style="left:998px;top:562px;width:12px;height:12px;background:#8181fb;border-radius:50%;"></div>
<div class="t" style="left:1017.60px;top:563.10px;font-size:11.7px;font-weight:normal;font-style:normal;color:#424242;">MobileSafari</div>
<div class="t" style="left:1175.20px;top:563.60px;font-size:11.1px;font-weight:normal;font-style:normal;color:#424242;">28.36%</div>
<div class="t" style="left:1222.20px;top:563.60px;font-size:11.1px;font-weight:normal;font-style:normal;color:#424242;">955 sessions</div>
<svg class="a" style="left:1312.8px;top:560.1px;" width="16" height="13" viewBox="0 0 16 13"><rect x="0.5" y="0.5" width="9.9" height="11.8" rx="2.6" fill="#0078d4"/><path d="M11.7 4.3 L14.1 2.6 C14.5 2.3 15 2.6 15 3.1 V9.9 C15 10.4 14.5 10.7 14.1 10.4 L11.7 8.6 Z" fill="#0078d4"/></svg>
<svg class="a" style="left:1354.0px;top:557.8px;" width="13" height="16" viewBox="0 0 13 16"><path d="M4.2 2.6 C4.2 1.6 5.2 0.9 6.4 0.8 L8 0.6 C8.3 2.2 9 3.6 10 5 C11 6.4 11.7 7.8 11.7 9.6 C11.7 12.4 9.4 14.4 6.5 14.4 C3.4 14.4 1 12.4 1 9.4 C1 7.8 1.6 6.4 2.4 5.4 C2.8 6.1 3.6 6.6 4.3 6.4 Z" fill="#0078d4"/></svg>
<div class="a" style="left:998px;top:602px;width:12px;height:12px;background:#d87504;border-radius:50%;"></div>
<div class="t" style="left:1017.60px;top:603.10px;font-size:11.7px;font-weight:normal;font-style:normal;color:#424242;">ChromeMobile</div>
<div class="t" style="left:1175.20px;top:603.60px;font-size:11.1px;font-weight:normal;font-style:normal;color:#424242;">27.85%</div>
<div class="t" style="left:1222.20px;top:603.60px;font-size:11.1px;font-weight:normal;font-style:normal;color:#424242;">938 sessions</div>
<svg class="a" style="left:1312.8px;top:600.1px;" width="16" height="13" viewBox="0 0 16 13"><rect x="0.5" y="0.5" width="9.9" height="11.8" rx="2.6" fill="#0078d4"/><path d="M11.7 4.3 L14.1 2.6 C14.5 2.3 15 2.6 15 3.1 V9.9 C15 10.4 14.5 10.7 14.1 10.4 L11.7 8.6 Z" fill="#0078d4"/></svg>
<svg class="a" style="left:1354.0px;top:597.8px;" width="13" height="16" viewBox="0 0 13 16"><path d="M4.2 2.6 C4.2 1.6 5.2 0.9 6.4 0.8 L8 0.6 C8.3 2.2 9 3.6 10 5 C11 6.4 11.7 7.8 11.7 9.6 C11.7 12.4 9.4 14.4 6.5 14.4 C3.4 14.4 1 12.4 1 9.4 C1 7.8 1.6 6.4 2.4 5.4 C2.8 6.1 3.6 6.6 4.3 6.4 Z" fill="#0078d4"/></svg>
<div class="a" style="left:998px;top:642px;width:12px;height:12px;background:#0a73d9;border-radius:50%;"></div>
<div class="t" style="left:1017.60px;top:643.10px;font-size:11.7px;font-weight:normal;font-style:normal;color:#424242;">InstagramApp</div>
<div class="t" style="left:1175.20px;top:643.60px;font-size:11.1px;font-weight:normal;font-style:normal;color:#424242;">4.42%</div>
<div class="t" style="left:1222.20px;top:643.60px;font-size:11.1px;font-weight:normal;font-style:normal;color:#424242;">149 sessions</div>
<svg class="a" style="left:1312.8px;top:640.1px;" width="16" height="13" viewBox="0 0 16 13"><rect x="0.5" y="0.5" width="9.9" height="11.8" rx="2.6" fill="#0078d4"/><path d="M11.7 4.3 L14.1 2.6 C14.5 2.3 15 2.6 15 3.1 V9.9 C15 10.4 14.5 10.7 14.1 10.4 L11.7 8.6 Z" fill="#0078d4"/></svg>
<svg class="a" style="left:1354.0px;top:637.8px;" width="13" height="16" viewBox="0 0 13 16"><path d="M4.2 2.6 C4.2 1.6 5.2 0.9 6.4 0.8 L8 0.6 C8.3 2.2 9 3.6 10 5 C11 6.4 11.7 7.8 11.7 9.6 C11.7 12.4 9.4 14.4 6.5 14.4 C3.4 14.4 1 12.4 1 9.4 C1 7.8 1.6 6.4 2.4 5.4 C2.8 6.1 3.6 6.6 4.3 6.4 Z" fill="#0078d4"/></svg>
<div class="a" style="left:998px;top:682px;width:12px;height:12px;background:#05a07e;border-radius:50%;"></div>
<div class="t" style="left:1017.60px;top:683.10px;font-size:11.7px;font-weight:normal;font-style:normal;color:#424242;">GoogleApp</div>
<div class="t" style="left:1175.20px;top:683.60px;font-size:11.1px;font-weight:normal;font-style:normal;color:#424242;">3.33%</div>
<div class="t" style="left:1222.20px;top:683.60px;font-size:11.1px;font-weight:normal;font-style:normal;color:#424242;">112 sessions</div>
<svg class="a" style="left:1312.8px;top:680.1px;" width="16" height="13" viewBox="0 0 16 13"><rect x="0.5" y="0.5" width="9.9" height="11.8" rx="2.6" fill="#0078d4"/><path d="M11.7 4.3 L14.1 2.6 C14.5 2.3 15 2.6 15 3.1 V9.9 C15 10.4 14.5 10.7 14.1 10.4 L11.7 8.6 Z" fill="#0078d4"/></svg>
<svg class="a" style="left:1354.0px;top:677.8px;" width="13" height="16" viewBox="0 0 13 16"><path d="M4.2 2.6 C4.2 1.6 5.2 0.9 6.4 0.8 L8 0.6 C8.3 2.2 9 3.6 10 5 C11 6.4 11.7 7.8 11.7 9.6 C11.7 12.4 9.4 14.4 6.5 14.4 C3.4 14.4 1 12.4 1 9.4 C1 7.8 1.6 6.4 2.4 5.4 C2.8 6.1 3.6 6.6 4.3 6.4 Z" fill="#0078d4"/></svg>
<div class="a" style="left:998px;top:722px;width:12px;height:12px;background:#a855f7;border-radius:50%;"></div>
<div class="t" style="left:1017.60px;top:723.10px;font-size:11.7px;font-weight:normal;font-style:normal;color:#424242;">Other</div>
<div class="t" style="left:1175.20px;top:723.60px;font-size:11.1px;font-weight:normal;font-style:normal;color:#424242;">5.46%</div>
<div class="t" style="left:1222.20px;top:723.60px;font-size:11.1px;font-weight:normal;font-style:normal;color:#424242;">184 sessions</div>
<svg class="a" style="left:1055.5px;top:724px;" width="12" height="8" viewBox="0 0 12 8"><path d="M1 1.2 L5.5 5.8 L10 1.2" fill="none" stroke="#2b88d8" stroke-width="1"/></svg>
</body></html>
